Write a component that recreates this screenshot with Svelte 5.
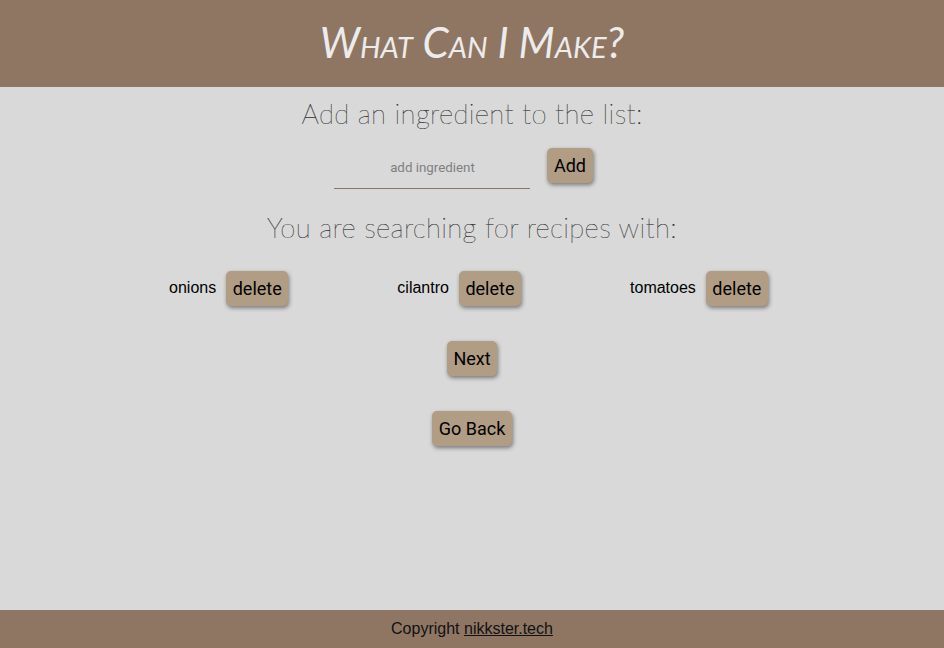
<script>
  let ingredients = ['onions', 'cilantro', 'tomatoes'];
</script>

<div class="page">
  <header class="site-header">
    <h1>What Can I Make?</h1>
  </header>

  <main>
    <h2 class="add-title">Add an ingredient to the list:</h2>
    <form class="add-form" on:submit|preventDefault>
      <input type="text" placeholder="add ingredient" />
      <button type="submit">Add</button>
    </form>

    <h2 class="search-title">You are searching for recipes with:</h2>
    <ul class="ingredients">
      {#each ingredients as item}
        <li>
          <span>{item}</span>
          <button type="button">delete</button>
        </li>
      {/each}
    </ul>

    <button class="nav next" type="button">Next</button>
    <button class="nav back" type="button">Go Back</button>
  </main>

  <footer class="site-footer">
    Copyright <a href="#top">nikkster.tech</a>
  </footer>
</div>

<style>
  :global(body) {
    margin: 0;
    background: #d9d9d9;
  }

  .page {
    display: flex;
    flex-direction: column;
    height: 648px;
    overflow: hidden;
    font-family: "Liberation Sans", Arial, sans-serif;
    color: #000;
  }

  .site-header {
    display: flex;
    align-items: center;
    justify-content: center;
    flex: none;
    box-sizing: border-box;
    height: 87px;
    padding-bottom: 3px;
    background: #8f7663;
  }

  h1 {
    margin: 0;
    font-family: "Lato", sans-serif;
    font-size: 42px;
    font-style: italic;
    font-weight: 400;
    font-variant: small-caps;
    line-height: 1;
    color: #ececec;
  }

  main {
    display: flex;
    flex: 1;
    flex-direction: column;
    align-items: center;
  }

  h2 {
    margin: 0;
    font-family: "Lato", sans-serif;
    font-size: 27.5px;
    font-weight: 100;
    line-height: 36px;
    color: #222;
    letter-spacing: 0.35px;
    -webkit-text-stroke: 0.2px #333;
  }

  .add-title {
    margin-top: 9px;
  }

  .add-form {
    display: flex;
    align-items: flex-start;
    margin-top: 16px;
    margin-left: -17px;
  }

  input {
    box-sizing: border-box;
    width: 196px;
    height: 41px;
    padding: 0 0 2px;
    border: 0;
    border-bottom: 1px solid #8f7663;
    background: transparent;
    font-family: Roboto, sans-serif;
    font-size: 13.33px;
    text-align: center;
    outline: none;
  }

  input::placeholder {
    color: #808080;
    opacity: 1;
  }

  button {
    box-sizing: border-box;
    height: 35px;
    padding: 0 6.5px;
    border: 0;
    border-radius: 5px;
    background: #b09d84;
    box-shadow: 1px 2px 4px rgba(0, 0, 0, 0.45);
    font-family: Roboto, sans-serif;
    font-size: 18px;
    color: #000;
  }

  .add-form button {
    margin-left: 17px;
  }

  .search-title {
    margin-top: 21px;
  }

  .ingredients {
    display: flex;
    justify-content: space-around;
    box-sizing: border-box;
    width: 708px;
    margin: 25px 0 0;
    padding: 0;
    list-style: none;
  }

  .ingredients li {
    display: flex;
    align-items: flex-start;
    padding-right: 7px;
    font-size: 16px;
  }

  .ingredients span {
    margin-top: 8px;
    line-height: 18px;
  }

  .ingredients button {
    margin-left: 10px;
  }

  .nav {
    margin-top: 35px;
  }

  .site-footer {
    flex: none;
    height: 38px;
    background: #8f7663;
    font-size: 16px;
    line-height: 37px;
    text-align: center;
    color: #111;
  }

  .site-footer a {
    color: #111;
  }
</style>
